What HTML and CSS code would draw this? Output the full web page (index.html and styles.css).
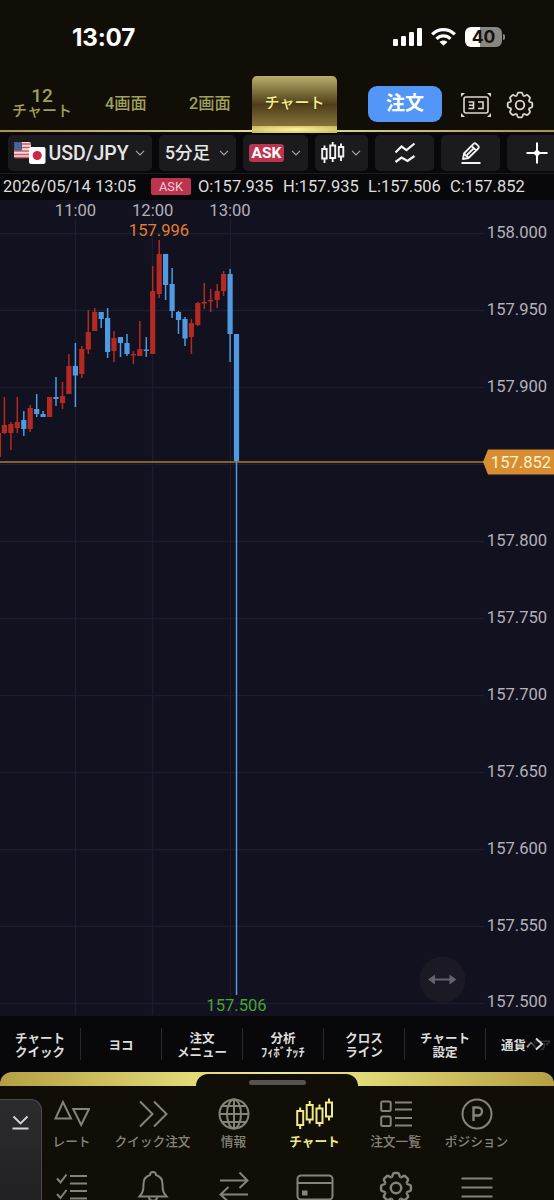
FILE: index.html
```html
<!DOCTYPE html>
<html lang="ja">
<head>
    <meta charset="UTF-8">
    <title>USD/JPY チャート</title>
    <link rel="stylesheet" href="styles.css">
</head>
<body>

<svg class="defs" width="0" height="0">
    <defs>
        <path id="tooth" d="M-3.7-8.9C-2.5-9.4-3-12.3-1.6-12.3H1.6C3-12.3 2.5-9.4 3.7-8.9"/>
        <symbol id="gear" viewBox="-14 -14 28 28">
            <use href="#tooth"/>
            <use href="#tooth" transform="rotate(45)"/>
            <use href="#tooth" transform="rotate(90)"/>
            <use href="#tooth" transform="rotate(135)"/>
            <use href="#tooth" transform="rotate(180)"/>
            <use href="#tooth" transform="rotate(225)"/>
            <use href="#tooth" transform="rotate(270)"/>
            <use href="#tooth" transform="rotate(315)"/>
            <circle r="4.3"/>
        </symbol>
        <symbol id="down" viewBox="0 0 10 6">
            <path d="M1 .8l4 4 4-4"/>
        </symbol>
    </defs>
</svg>

<header class="header">
    <div class="status">
        <span class="clock">13:07</span>
        <div class="status-icons">
            <svg width="29" height="18" viewBox="0 0 29 18" fill="#fff">
                <rect x="0" y="11" width="5" height="7" rx="1.3"/>
                <rect x="8" y="8" width="5" height="10" rx="1.3"/>
                <rect x="16" y="4" width="5" height="14" rx="1.3"/>
                <rect x="24" y="0" width="5" height="18" rx="1.3"/>
            </svg>
            <svg width="25" height="18" viewBox="0 0 25 18" fill="none" stroke="#fff" stroke-width="3.2">
                <path d="M1.2 6.4C7.5.1 17.5.1 23.8 6.4"/>
                <path d="M5.5 10.8c4-3.9 10-3.9 14 0"/>
                <path d="M12.5 17.8L8.6 14c2.2-2 5.600-2 7.800 0z" fill="#fff" stroke="none"/>
            </svg>
            <div class="battery">40</div>
        </div>
    </div>
    <div class="tabs">
        <div class="tab twelve"><div>12</div><div class="tab-kana">チャート</div></div>
        <div class="tab"><span>4画面</span></div>
        <div class="tab"><span>2画面</span></div>
        <div class="tab active"><span>チャート</span></div>
        <div class="order-button">注文</div>
        <svg class="yoko" width="32" height="26" viewBox="0 0 32 26" fill="none" stroke="#ddd9ce" stroke-width="1.6">
            <rect x="4" y="5" width="24" height="16" rx="2"/>
            <path d="M8.500 10h5v6.500h-5M9 13.200h4.500M18 10h5v6.500h-5"/>
            <path d="M1 1h4L1 5zM31 1h-4l4 4zM1 25h4l-4-4zM31 25h-4l4-4z" fill="#ddd9ce" stroke="none"/>
        </svg>
        <svg class="gear" width="28" height="28"><use href="#gear"/></svg>
    </div>
</header>

<div class="toolbar">
    <div class="tool pair">
        <svg width="32" height="24" viewBox="0 0 32 24">
            <rect x="0" y="1" width="17" height="16" rx="2" fill="#e8dfe2"/>
            <path d="M0 3h17M0 6.500h17M0 10h17M0 13.500h17M1 16.500h15" stroke="#d55661" stroke-width="1.700"/>
            <rect x="0" y="1" width="8" height="8.500" rx="1" fill="#3d5a90"/>
            <path d="M1.500 3h6M1.500 5.200h6M1.500 7.400h6" stroke="#8ea3c4" stroke-width=".7" stroke-dasharray="1 1"/>
            <rect x="15" y="6" width="16.500" height="17" rx="2" fill="#fff"/>
            <circle cx="23.200" cy="14.500" r="4.500" fill="#cf2443"/>
        </svg>
        <span class="pair-name">USD/JPY</span>
        <svg class="caret" width="10" height="6"><use href="#down"/></svg>
    </div>
    <div class="tool period">
        <span>5分足</span>
        <svg class="caret" width="10" height="6"><use href="#down"/></svg>
    </div>
    <div class="tool side">
        <span class="ask-big">ASK</span>
        <svg class="caret" width="10" height="6"><use href="#down"/></svg>
    </div>
    <div class="tool kind">
        <svg width="24" height="24" viewBox="0 0 24 24" fill="none" stroke="#f2f2f2" stroke-width="1.900">
            <path d="M1.200 8h4.500v9.500H1.200zM9.200 4.500h5V17h-5zM17.800 6h4.500v9.500h-4.500zM3.500 4.500V8M3.500 17.500V22M11.700 1v3.500M11.700 17v4M20 2.500V6M20 15.500V20"/>
        </svg>
        <svg class="caret" width="10" height="6"><use href="#down"/></svg>
    </div>
    <div class="tool icon">
        <svg width="22" height="22" viewBox="0 0 22 22" fill="none" stroke="#f2f2f2" stroke-width="2.200">
            <path d="M1.500 10.500L7.500 4.500l5 3.700L20.500 1.500M1.500 20l6-4.500 6 3.500 7-5"/>
        </svg>
    </div>
    <div class="tool icon">
        <svg width="22" height="22" viewBox="0 0 22 22" fill="none" stroke="#f2f2f2" stroke-width="1.800" stroke-linejoin="round">
            <path d="M3 17l1-5.500L13.500 1.800q1.300-1.200 2.600 0l2.100 2.100q1.200 1.300 0 2.600L8.500 16zM11.500 3.800l4.700 4.700M4 11.500L8.500 16M13.500 6.500L7 13M1.500 21h19"/>
        </svg>
    </div>
    <div class="tool icon">
        <svg width="22" height="22" viewBox="0 0 22 22" fill="none" stroke="#fff" stroke-width="2">
            <path d="M11 .5v21M.5 11h21"/>
            <circle cx="11" cy="11" r="2.800" fill="#fff" stroke="none"/>
        </svg>
    </div>
</div>

<div class="ohlc">
    <span class="date">2026/05/14 13:05</span>
    <span class="ask-small">ASK</span>
    <span class="open">O:157.935</span>
    <span class="high">H:157.935</span>
    <span class="low">L:157.506</span>
    <span>C:157.852</span>
</div>

<main class="chart">
    <svg class="plot" width="554" height="816" viewBox="0 200 554 816">
        <path class="grid" d="M0 233.500H484M0 310.500H484M0 387.500H484M0 464.500H484M0 541.500H484M0 618.500H484M0 695.500H484M0 772.500H484M0 849.500H484M0 926.500H484M0 1003.500H484M75.500 219V1015M152.500 219V1015M230.500 219V1015"/>

        <!-- rising candles -->
        <path class="wick up" d="M.3 433V457M4.400 397V434M10.900 422V450M17.300 397V433M30.200 405V432M62.500 382V409M68.900 354V394M81.800 346V378M88.300 310V354M94.700 308V331M114 331V362M133.400 351V364M139.800 321V356M152.700 266V354M159.200 240V298M191.400 319V354M197.800 302V326M204.300 283V309M210.700 289V312M217.200 284V308M223.600 271V296"/>
        <path class="body up" d="M4.400 425V433M10.900 424V433M17.300 422V428M30.200 408V429M49.600 397V417M62.500 396V403M68.900 366V394M81.800 349V374M88.300 332V349.500M94.700 312V331M114 338V351M133.400 354V355.500M139.800 349V356M152.700 291V354M159.200 254V294M191.400 323V337M197.800 303V325M204.300 302V303.500M210.700 300V301.500M217.200 291V300M223.600 274V291"/>

        <!-- falling candles -->
        <path class="wick down" d="M23.800 411V436M36.700 394V417M43.100 411V417M56 377V406M75.400 343V407M101.200 312V328M107.600 308V358M120.500 337V357M127 334V356M146.300 337V357M165.600 254V300M172.100 268V318M178.500 311V334M185 317V346M230.100 269V362M236.500 334V995"/>
        <path class="body down" d="M23.800 420V429M36.700 409V414M43.100 414V417M56 397V399M75.400 366V375.500M101.200 312V319M107.600 318V352M120.500 337V343M127 343V354M146.300 349.500V351M165.600 254V285M172.100 284V311M178.500 312V320M185 319V338.500M230.100 274V334M236.500 334V461"/>

        <g class="axis">
            <text x="75.500" y="215.500">11:00</text>
            <text x="152.700" y="215.500">12:00</text>
            <text x="230" y="215.500">13:00</text>
            <text x="517" y="237.500">158.000</text>
            <text x="517" y="314.500">157.950</text>
            <text x="517" y="391.500">157.900</text>
            <text x="517" y="545.500">157.800</text>
            <text x="517" y="622.500">157.750</text>
            <text x="517" y="699.500">157.700</text>
            <text x="517" y="776.500">157.650</text>
            <text x="517" y="853.500">157.600</text>
            <text x="517" y="930.500">157.550</text>
            <text x="517" y="1007">157.500</text>
        </g>
        <text class="peak" x="159" y="236">157.996</text>
        <text class="bottom" x="236.500" y="1011">157.506</text>

        <!-- current price -->
        <path d="M0 462H484" stroke="#a97c35" stroke-width="1.600"/>
        <path d="M483 462l5-12.500h66v25h-66z" fill="#d98d32"/>
        <text class="now" x="521" y="468">157.852</text>

        <circle cx="442.500" cy="979.500" r="23" fill="#1a1924"/>
        <path d="M433 979.500h19" stroke="#63626d" stroke-width="2"/>
        <path d="M428 979.500l7-5v10zM456.500 979.500l-7-5v10z" fill="#63626d"/>
    </svg>
</main>

<div class="quick">
    <div class="quick-item"><span>チャート<br>クイック</span></div>
    <div class="quick-item"><span>ヨコ</span></div>
    <div class="quick-item"><span>注文<br>メニュー</span></div>
    <div class="quick-item"><span>分析<br><span class="half">ﾌｨﾎﾞﾅｯﾁ</span></span></div>
    <div class="quick-item"><span>クロス<br>ライン</span></div>
    <div class="quick-item"><span>チャート<br>設定</span></div>
    <div class="quick-item last">通貨<span class="faded">ペア</span>
        <svg class="next" width="9" height="14" viewBox="0 0 9 14" fill="none" stroke="#ddd" stroke-width="2"><path d="M1 1.500L7 7l-6 5.500"/></svg>
    </div>
</div>

<div class="gold"><div class="notch"><div class="handle"></div></div></div>

<footer class="footer">
    <div class="fold">
        <svg width="17" height="15" viewBox="0 0 17 15" fill="none" stroke="#d4d4d4" stroke-width="1.900"><path d="M1.500 1.500l7 7 7-7M.5 13.500h16"/></svg>
    </div>
    <nav class="nav">
        <div class="nav-item">
            <svg width="36" height="32" viewBox="0 0 36 32"><path d="M9 4L1.500 20.500h15.500zM19.200 11H35L27.200 27z"/></svg>
            レート
        </div>
        <div class="nav-item">
            <svg width="32" height="32" viewBox="0 0 32 32"><path d="M3 3.500L15.500 16 3 28.500M17 3.500L29.500 16 17 28.500"/></svg>
            クイック注文
        </div>
        <div class="nav-item">
            <svg width="32" height="32" viewBox="0 0 32 32"><circle cx="16" cy="16" r="14.500"/><ellipse cx="16" cy="16" rx="7" ry="14.500"/><path d="M16 1.500v29M1.500 16h29M4 8h24M4 24h24"/></svg>
            情報
        </div>
        <div class="nav-item on">
            <svg width="38" height="32" viewBox="0 0 38 32"><path d="M1.200 13h6v14h-6zM10.700 7h6v14.500h-6zM20.500 10.500h6V25h-6zM30 4.500h6v14h-6zM4.200 9.500V13M4.200 27v4M13.700 3v4M13.700 21.500v4M23.500 6.500v4M23.500 25v3.500M33 .5v4M33 18.500v4"/></svg>
            チャート
        </div>
        <div class="nav-item">
            <svg width="32" height="32" viewBox="0 0 32 32"><rect x="1.200" y="3.500" width="9.500" height="9.500" rx="1.500"/><rect x="1.200" y="18.500" width="9.500" height="9.500" rx="1.500"/><path d="M15 4.500h17M15 11.500h17M15 20h17M15 27.500h17"/></svg>
            注文一覧
        </div>
        <div class="nav-item">
            <svg width="32" height="32" viewBox="0 0 32 32"><circle cx="16" cy="16" r="14.500"/><path stroke-width="2.400" d="M12.500 23V9.500h4.500a4 4 0 0 1 0 8h-4.500"/></svg>
            ポジション
        </div>

        <div class="nav-item">
            <svg width="32" height="32" viewBox="0 0 32 32"><path d="M1 7.500l3.500 4 6-8M14 5h17M14 12.500h17M1 23l3.500 4 6-8M14 20h17M14 27.500h17"/></svg>
        </div>
        <div class="nav-item">
            <svg width="32" height="32" viewBox="0 0 32 32"><path d="M13 4c0-4 6-4 6 0 5 1.500 6.500 5 6.500 9 0 7 1 9 4 12.500h-27C5.500 22 6.500 20 6.500 13c0-4 1.500-7.500 6.500-9zM12 26c0 5 8 5 8 0"/></svg>
        </div>
        <div class="nav-item">
            <svg width="32" height="32" viewBox="0 0 32 32"><path d="M2 9.500h27M21.500 1.500l8 8-8 7.500M30 23.500H3M10.500 16l-8 7.500 8 7.500"/></svg>
        </div>
        <div class="nav-item">
            <svg width="38" height="32" viewBox="0 0 38 32"><rect x="1.500" y="4.500" width="35" height="24" rx="3.500"/><path d="M1.500 12h35"/><rect x="7" y="20.500" width="3.500" height="3" fill="#858479"/></svg>
        </div>
        <div class="nav-item">
            <svg width="34" height="34"><use href="#gear"/></svg>
        </div>
        <div class="nav-item">
            <svg width="32" height="32" viewBox="0 0 32 32"><path d="M.5 7.500h31M.5 16.500h31M.5 25.500h31"/></svg>
        </div>
    </nav>
</footer>

</body>
</html>
```
FILE: styles.css
```css
* {
    box-sizing: border-box;
}

body {
    margin: 0;
    width: 554px;
    height: 1200px;
    overflow: hidden;
    background: #08080a;
    color: #ddd;
    font-family: Roboto, "Noto Sans CJK JP", sans-serif;
}

svg {
    display: block;
    flex: none;
}

.defs {
    position: absolute;
}

/* header */
.header {
    height: 133px;
    background: linear-gradient(90deg, #a8924a, #ece29a 50%, #a8924a) 0 130px / 100% 2px no-repeat #110e07;
}

.status {
    height: 76px;
    display: flex;
    justify-content: space-between;
    padding: 24px 48px 0 72px;
}

.clock {
    color: #fff;
    font: bold 24.2px/28px Inter, sans-serif;
    letter-spacing: -.2px;
}

.status-icons {
    display: flex;
    align-items: center;
    gap: 9px;
    height: 26px;
}

.battery {
    position: relative;
    width: 37px;
    height: 20px;
    margin-right: 4px;
    border-radius: 6px;
    background: linear-gradient(90deg, #fff 40%, #898782 40%);
    color: #16130c;
    font: bold 17.5px/20px Inter, sans-serif;
    text-align: center;
}

.battery::after {
    content: "";
    position: absolute;
    right: -3px;
    top: 7px;
    width: 2px;
    height: 6px;
    border-radius: 0 2px 2px 0;
    background: #898782;
}

.tabs {
    display: flex;
    height: 57px;
}

.tab {
    width: 84px;
    display: flex;
    flex-direction: column;
    align-items: center;
    justify-content: center;
    color: #a0a05c;
    font-size: 18px;
    font-weight: 500;
    line-height: 17px;
    padding-bottom: 3px;
}

.twelve {
    font-size: 19px;
    padding-bottom: 4px;
}

.tab span {
    font-size: 16.3px;
}

.tab-kana {
    font-size: 15px;
    line-height: 15px;
}

.tab.active {
    width: 85px;
    border-radius: 5px 5px 0 0;
    background:
        radial-gradient(ellipse at center, #fdf6a0, #c9b555) 0 100% / 100% 7px no-repeat,
        linear-gradient(#b9ae6c, #4f3e19 50%, #85733c 88%);
    color: #f4ed91;
}

.tab.active span {
    font-size: 15px;
    text-shadow: 0 1px 1px #443814;
}

.order-button {
    width: 74px;
    height: 36px;
    margin: 10px 18px 0 31px;
    border-radius: 9px;
    background: #5297f7;
    color: #fff;
    font-size: 19px;
    font-weight: bold;
    line-height: 36px;
    text-align: center;
}

.yoko {
    margin-top: 16px;
}

.gear {
    margin: 15px 0 0 14px;
    fill: none;
    stroke: #ddd9ce;
    stroke-width: 1.8;
}

/* toolbar */
.toolbar {
    display: flex;
    gap: 7px;
    height: 41px;
    padding: 2px 0 0 8px;
    border-bottom: 1px solid #1c1c1e;
}

.tool {
    flex: none;
    height: 36px;
    border-radius: 5px;
    background: #1b1b1e;
    display: flex;
    align-items: center;
    justify-content: space-between;
    padding: 0 7px 0 6px;
    color: #e6e6e6;
}

.pair {
    width: 144px;
}

.pair-name {
    width: 80px;
    margin-left: -4px;
    font-size: 19.5px;
    font-weight: 500;
}

.period {
    width: 77px;
    font-size: 17.6px;
    font-weight: 500;
    line-height: 36px;
}

.side {
    width: 65px;
}

.kind {
    width: 53px;
}

.icon {
    width: 59px;
    justify-content: center;
    padding: 0;
}

.caret {
    fill: none;
    stroke: #a6a6a6;
    stroke-width: 1.2;
}

.ask-big,
.ask-small {
    background: #bd3450;
    color: #fff;
    text-align: center;
}

.ask-big {
    width: 35px;
    height: 18px;
    border-radius: 3px;
    font-size: 15.5px;
    font-weight: bold;
    line-height: 19px;
}

.ask-small {
    width: 40px;
    height: 17px;
    margin: 0 7px 0 13px;
    border-radius: 2px;
    color: #f1c9d1;
    font-size: 12.8px;
    line-height: 18px;
}

.ohlc {
    display: flex;
    align-items: center;
    height: 26px;
    padding-left: 3px;
    padding-bottom: 1px;
    font-size: 16.5px;
    white-space: nowrap;
}

.date {
    width: 135px;
}

.open {
    width: 85px;
}

.high {
    width: 85px;
}

.low {
    width: 82px;
}

/* chart */
.chart {
    height: 816px;
    background: #12111f;
}

.grid {
    stroke: #1e1c31;
    stroke-width: 1.4;
}

.wick {
    stroke-width: 1.5;
}

.body {
    stroke-width: 5.2;
}

.up {
    stroke: #b32a22;
}

.down {
    stroke: #4f9ae0;
}

.plot text {
    font-size: 16.6px;
    text-anchor: middle;
}

.axis {
    fill: #b2b1b8;
}

.peak {
    fill: #e37d31;
}

.bottom {
    fill: #48a434;
}

.now {
    fill: #fff3c9;
}

/* shortcuts */
.quick {
    display: flex;
    height: 56px;
    align-items: center;
}

.quick-item {
    flex: none;
    width: 81px;
    height: 32px;
    display: flex;
    align-items: center;
    justify-content: center;
    padding-top: 3px;
    border-right: 1px solid #29292b;
    font-size: 12.5px;
    font-weight: bold;
    line-height: 14px;
    text-align: center;
    white-space: nowrap;
}

.half {
    font-size: 12.5px;
}

.last {
    position: relative;
    width: 68px;
    border: 0;
    justify-content: flex-start;
    padding-left: 15px;
    overflow: hidden;
}

.faded {
    background: linear-gradient(90deg, #ccc, #333 35%);
    -webkit-background-clip: text;
    color: transparent;
}

.next {
    position: absolute;
    left: 49px;
    top: 9px;
}

/* bottom navigation */
.gold {
    height: 14px;
    border-radius: 12px 12px 0 0;
    background: linear-gradient(90deg, #b59f45, #e2da77 35%, #eee68a 50%, #e2da77 65%, #b59f45);
    display: flex;
    justify-content: center;
}

.notch {
    width: 162px;
    height: 12px;
    margin-top: 2px;
    border-radius: 12px 12px 0 0;
    background: #110e07;
    display: flex;
    justify-content: center;
}

.handle {
    width: 57px;
    height: 5px;
    margin-top: 6px;
    border-radius: 3px;
    background: #555350;
}

.footer {
    display: flex;
    height: 114px;
    background: #110e07;
}

.fold {
    width: 42px;
    height: 110px;
    margin-top: 13px;
    margin-right: -11px;
    flex: none;
    padding: 15px 0 0 12px;
    border: 1px solid #49494b;
    border-left: 0;
    border-radius: 0 11px 0 0;
    background: linear-gradient(#2c2c2e, #202023);
}

.nav {
    display: grid;
    grid-template-columns: repeat(6, 81px);
    grid-template-rows: 73px 73px;
    padding-top: 12px;
}

.nav-item {
    display: flex;
    flex-direction: column;
    align-items: center;
    gap: 3px;
    color: #858479;
    font-size: 12.7px;
    font-weight: 500;
    line-height: 18px;
    white-space: nowrap;
}

.nav-item svg {
    fill: none;
    stroke: #858479;
    stroke-width: 2;
}

.nav-item.on {
    color: #f0e986;
    font-weight: bold;
}

.nav-item.on svg {
    stroke: #f0e986;
}
```
